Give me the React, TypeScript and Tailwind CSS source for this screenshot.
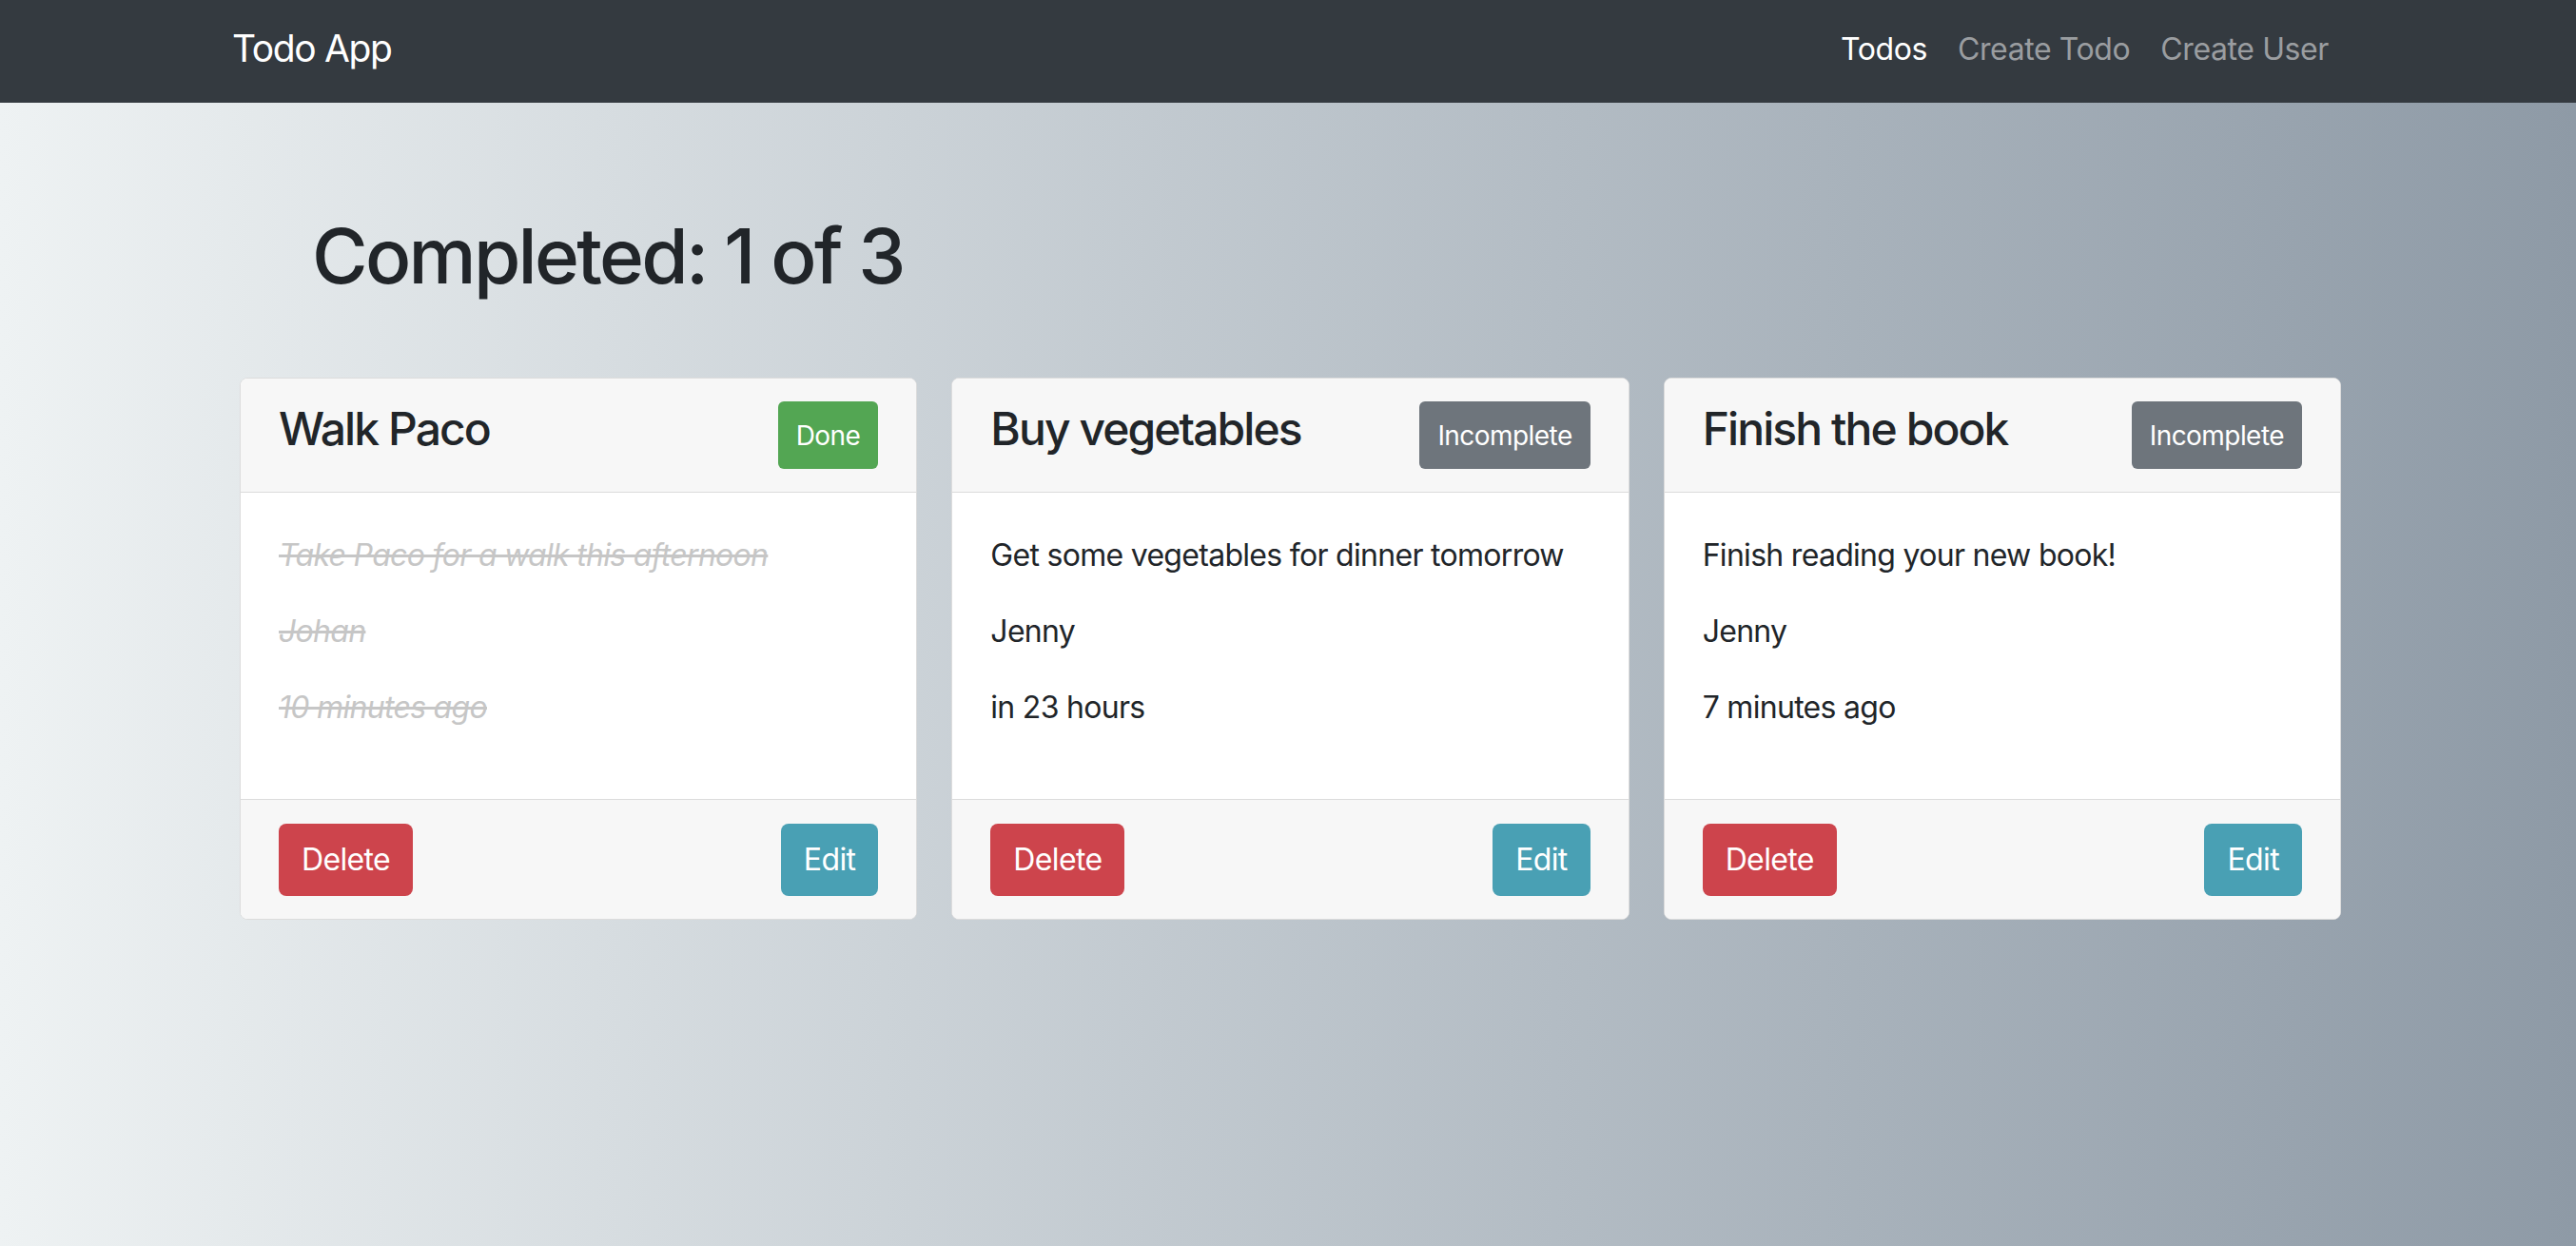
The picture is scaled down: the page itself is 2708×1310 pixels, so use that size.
import React from 'react';

interface Todo {
  title: string;
  description: string;
  user: string;
  when: string;
  completed: boolean;
}

const todos: Todo[] = [
  { title: 'Walk Paco', description: 'Take Paco for a walk this afternoon', user: 'Johan', when: '10 minutes ago', completed: true },
  { title: 'Buy vegetables', description: 'Get some vegetables for dinner tomorrow', user: 'Jenny', when: 'in 23 hours', completed: false },
  { title: 'Finish the book', description: 'Finish reading your new book!', user: 'Jenny', when: '7 minutes ago', completed: false },
];

function TodoCard({ todo }: { todo: Todo }) {
  const textClass = todo.completed
    ? 'italic line-through text-[#c6c6c6] decoration-[#c6c6c6]'
    : 'text-[#212529]';
  return (
    <div className="flex flex-col bg-white border border-[#dcdcdc] rounded-[8px] overflow-hidden">
      {/* Header */}
      <div className="flex items-start justify-between px-[40px] py-[24px] bg-[#f7f7f7] border-b border-[#dcdcdc]">
        <h4 className="text-[48px] leading-[1.2] font-medium text-[#212529] tracking-[-0.04em]">{todo.title}</h4>
        {todo.completed ? (
          <button className="h-[71px] px-[19px] rounded-[6px] bg-[#53a653] text-white text-[28px] leading-none tracking-[-0.02em]">
            Done
          </button>
        ) : (
          <button className="h-[71px] px-[19px] rounded-[6px] bg-[#6e757c] text-white text-[28px] leading-none tracking-[-0.02em]">
            Incomplete
          </button>
        )}
      </div>

      {/* Body */}
      <div className="px-[40px] pt-[42px] pb-[40px] text-[32px] leading-[48px] tracking-[-0.022em]">
        <p className={`mb-[32px] ${textClass}`}>{todo.description}</p>
        <p className={`mb-[32px] ${textClass}`}>{todo.user}</p>
        <p className={`mb-[32px] ${textClass}`}>{todo.when}</p>
      </div>

      {/* Footer */}
      <div className="flex items-center justify-between px-[40px] pt-[25px] pb-[24px] bg-[#f7f7f7] border-t border-[#dcdcdc]">
        <button className="h-[76px] px-[24px] rounded-[8px] bg-[#cd444c] text-white text-[32px] leading-none tracking-[-0.02em]">
          Delete
        </button>
        <button className="h-[76px] px-[24px] rounded-[8px] bg-[#49a0b4] text-white text-[32px] leading-none tracking-[-0.02em]">
          Edit
        </button>
      </div>
    </div>
  );
}

export default function App() {
  const done = todos.filter((t) => t.completed).length;

  return (
    <div
      className="min-h-[1310px] bg-gradient-to-r from-[#eef2f3] to-[#8e9aa6]"
      style={{ fontFamily: 'Inter, "Noto Sans", sans-serif' }}
    >
      {/* Navbar */}
      <nav className="h-[108px] bg-[#343a40]">
        <div className="mx-auto w-[2220px] h-full flex items-center justify-between">
          <a className="text-[39px] leading-[60px] text-white pb-[6px] tracking-[-0.035em]">Todo App</a>
          <div className="flex items-center pb-[4px] tracking-[-0.025em]">
            <a className="px-[16px] text-[32px] leading-[48px] text-white">Todos</a>
            <a className="px-[16px] text-[32px] leading-[48px] text-[#9a9da0]">Create Todo</a>
            <a className="px-[16px] text-[32px] leading-[48px] text-[#9a9da0]">Create User</a>
          </div>
        </div>
      </nav>

      <main className="mx-auto w-[2220px] pt-[113px]">
        <h1 className="pl-[84px] text-[80px] leading-[1.2] font-medium text-[#212529] tracking-[-0.034em]">
          Completed: {done} of {todos.length}
        </h1>

        <div className="mt-[80px] pl-[8px] pr-[3px] grid grid-cols-3 gap-[36px]">
          {todos.map((t) => (
            <TodoCard key={t.title} todo={t} />
          ))}
        </div>
      </main>
    </div>
  );
}
